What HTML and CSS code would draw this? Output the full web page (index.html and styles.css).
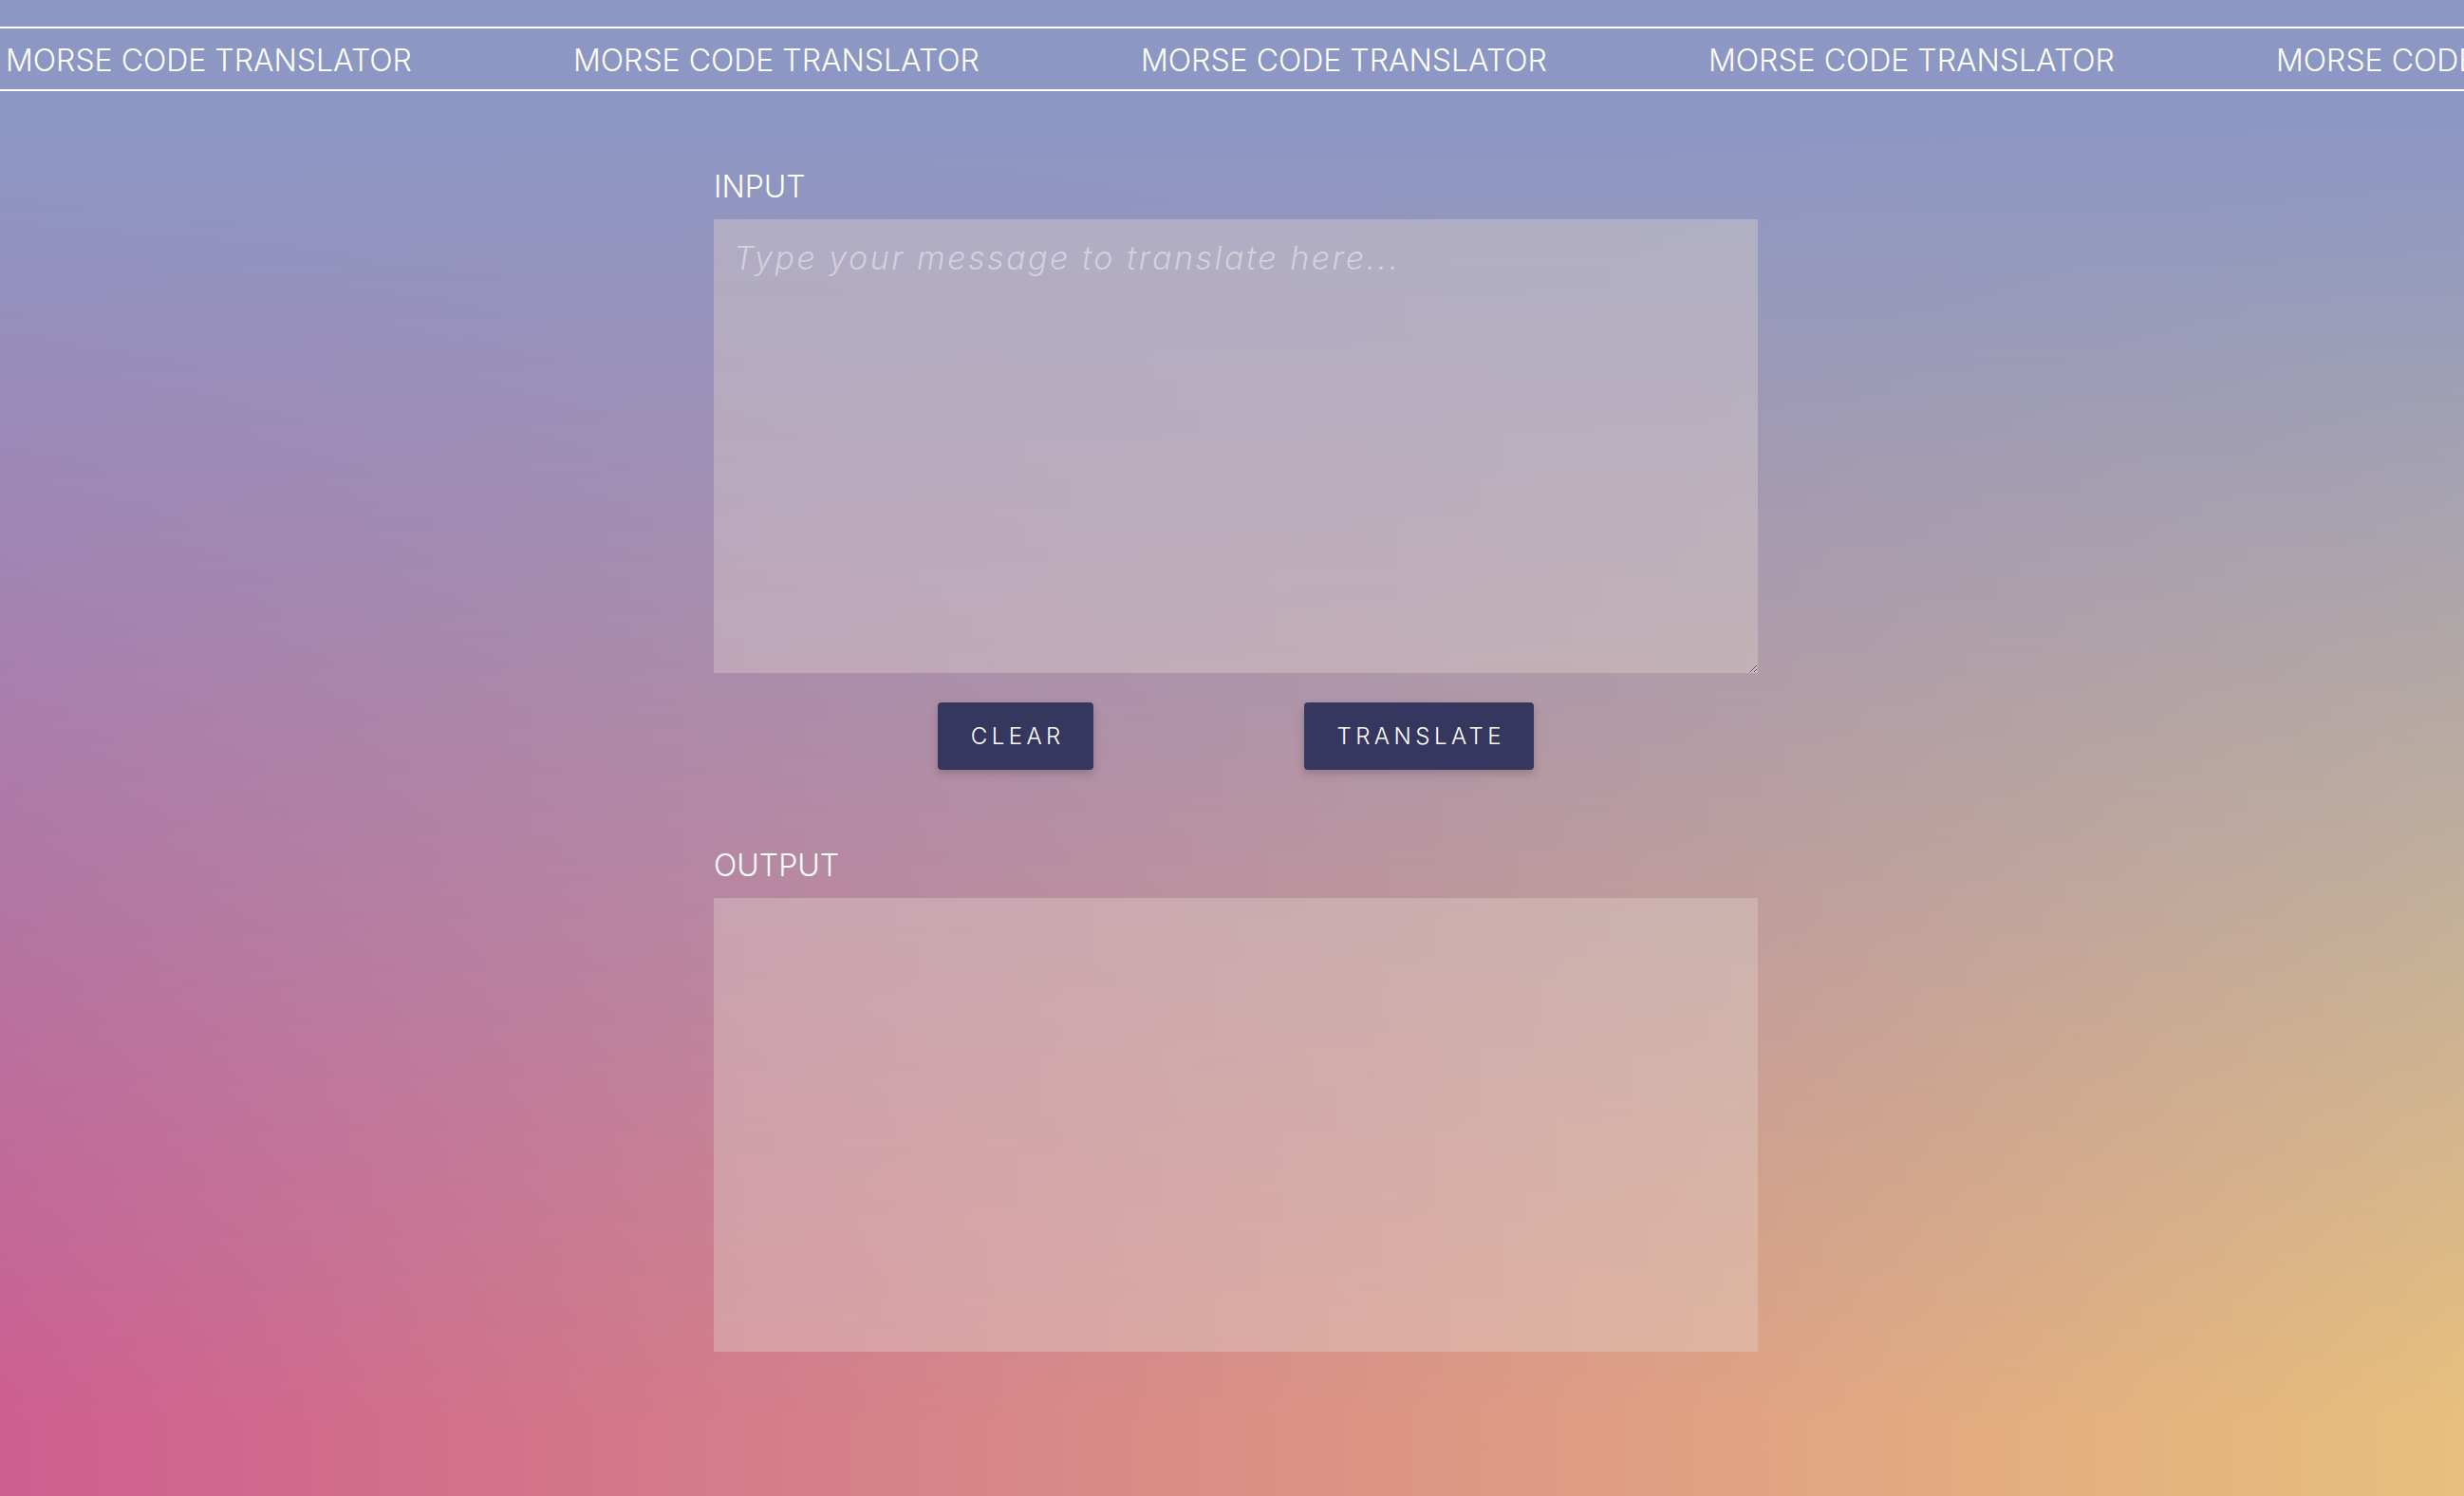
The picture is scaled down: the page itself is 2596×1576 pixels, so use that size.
FILE: index.html
```html
<!DOCTYPE html>
<html lang="en">
<head>
<meta charset="utf-8">
<title>Morse Code Translator</title>
<link rel="stylesheet" href="styles.css">
</head>
<body>
<header class="marquee">
  <div class="marquee-track">
    <span class="marquee-item">MORSE CODE TRANSLATOR</span>
    <span class="marquee-item">MORSE CODE TRANSLATOR</span>
    <span class="marquee-item">MORSE CODE TRANSLATOR</span>
    <span class="marquee-item">MORSE CODE TRANSLATOR</span>
    <span class="marquee-item">MORSE CODE TRANSLATOR</span>
  </div>
</header>
<main class="translator">
  <section class="panel">
    <label class="panel-label" for="input">INPUT</label>
    <textarea id="input" class="field" placeholder="Type your message to translate here..."></textarea>
  </section>
  <div class="actions">
    <button class="btn btn-clear" type="button">CLEAR</button>
    <button class="btn btn-translate" type="button">TRANSLATE</button>
  </div>
  <section class="panel panel-output">
    <div class="panel-label">OUTPUT</div>
    <div class="field output"></div>
  </section>
</main>
</body>
</html>
```

FILE: styles.css
```css
html {
  min-height: 100%;
  background:
    linear-gradient(to bottom, #8c97c4 8%, rgba(140, 151, 196, 0) 95%),
    linear-gradient(to right, #cd5f8f 0%, #e8bf7d 100%);
  background-attachment: fixed;
}

body {
  margin: 0;
  min-height: 1576px;
  font-family: "Inter", "Liberation Sans", sans-serif;
  color: #ffffff;
  overflow: hidden;
}

.marquee {
  margin-top: 28px;
  border-top: 2px solid #ffffff;
  border-bottom: 2px solid #ffffff;
  height: 64px;
  overflow: hidden;
}

.marquee-track {
  display: flex;
  flex-wrap: nowrap;
  padding: 2px 0 0 6px;
}

.marquee-item {
  flex: 0 0 598px;
  font-size: 32px;
  font-weight: 300;
  line-height: 64px;
  white-space: nowrap;
}

.translator {
  width: 1100px;
  margin: 79px 0 0 calc(50% - 546px);
  display: flex;
  flex-direction: column;
}

.panel {
  display: flex;
  flex-direction: column;
}

.panel-output {
  margin-top: 79px;
}

.panel-label {
  font-size: 32px;
  font-weight: 300;
  line-height: 40px;
  padding-top: 2px;
  margin-bottom: 14px;
}

.field {
  box-sizing: border-box;
  width: 1100px;
  height: 478px;
  margin: 0;
  border: none;
  outline: none;
  padding: 20px 21px;
  background: rgba(228, 214, 206, 0.37);
  color: #ffffff;
  font-family: "Inter", "Liberation Sans", sans-serif;
  font-size: 34px;
  font-weight: 300;
  letter-spacing: 2.5px;
  resize: both;
}

.field::placeholder {
  color: rgba(255, 255, 255, 0.45);
  font-style: italic;
}

.actions {
  display: flex;
  justify-content: center;
  gap: 222px;
  margin-top: 31px;
}

.btn {
  height: 71px;
  padding: 0 0 0 4.5px;
  border: none;
  border-radius: 4px;
  background: #35375f;
  color: #ffffff;
  font-family: "Inter", "Liberation Sans", sans-serif;
  font-size: 24px;
  font-weight: 300;
  letter-spacing: 4.5px;
  box-shadow: 0 4px 10px rgba(0, 0, 0, 0.18);
  cursor: pointer;
}

.btn-clear {
  width: 164px;
}

.btn-translate {
  width: 242px;
}
```
